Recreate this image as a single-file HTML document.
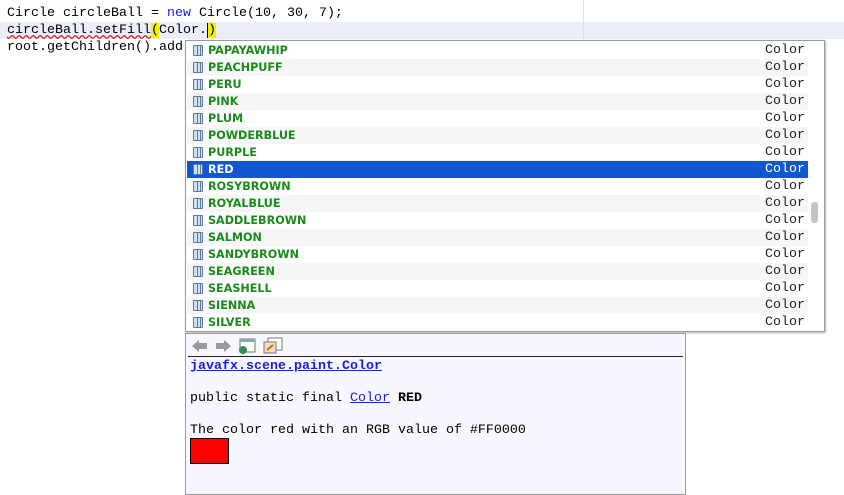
<!DOCTYPE html>
<html><head><style>
body{margin:0;width:844px;height:492px;background:#fff;position:relative;overflow:hidden;font-family:"Liberation Mono",monospace;font-size:13.33px}
.code{position:absolute;left:7px;white-space:pre;color:#000;line-height:17px}
.pop{position:absolute;left:185px;top:40px;width:638px;height:290px;border:1px solid #9a9a9a;background:#fff;box-shadow:1px 1px 2px rgba(0,0,0,.3)}
.row{position:absolute;left:1px;width:621px;height:17px}
.row .n{position:absolute;left:21px;top:1px;font:bold 11.2px "DejaVu Sans",sans-serif;color:#1a8a1a;line-height:15px}
.row .c{position:absolute;right:3px;top:1px;color:#222}
.row .i{position:absolute;left:6px;top:3px;width:10px;height:11px;border:1px solid #5a7aa0;background:linear-gradient(90deg,#cfe0f0 0 3px,#5a7aa0 3px 4px,#cfe0f0 4px 6px,#5a7aa0 6px 7px,#cfe0f0 7px);box-sizing:border-box;border-radius:1px}
.sel{background:#1158d0}.sel .n,.sel .c{color:#fff}
.alt{background:#f6f6f6}
.doc{position:absolute;left:185px;top:333px;width:499px;height:160px;border:1px solid #9a9a9a;background:#f7f7ff}
.doc .t{position:absolute;left:4px;white-space:pre}
a{color:#1a1aee;text-decoration:underline}
</style></head><body>
<div style="position:absolute;left:0;top:22px;width:844px;height:17px;background:#e9eef8"></div>
<div style="position:absolute;left:583px;top:0;width:1px;height:40px;background:#e2e2e2"></div>
<div class="code" style="top:5px">Circle circleBall = <span style="color:#2020e0">new</span> Circle(10, 30, 7);</div>
<div class="code" style="top:22px"><span style="text-decoration:underline wavy #e02020">circleBall.setFill</span><span style="background:#f6f000">(</span>Color.<span style="background:#f6f000;border-left:1px solid #000">)</span></div>
<div class="code" style="top:39px">root.getChildren().add</div>
<div class="pop">
<div class="row" style="top:1px"><div class="i"></div><span class="n">PAPAYAWHIP</span><span class="c">Color</span></div>
<div class="row alt" style="top:18px"><div class="i"></div><span class="n">PEACHPUFF</span><span class="c">Color</span></div>
<div class="row" style="top:35px"><div class="i"></div><span class="n">PERU</span><span class="c">Color</span></div>
<div class="row alt" style="top:52px"><div class="i"></div><span class="n">PINK</span><span class="c">Color</span></div>
<div class="row" style="top:69px"><div class="i"></div><span class="n">PLUM</span><span class="c">Color</span></div>
<div class="row alt" style="top:86px"><div class="i"></div><span class="n">POWDERBLUE</span><span class="c">Color</span></div>
<div class="row" style="top:103px"><div class="i"></div><span class="n">PURPLE</span><span class="c">Color</span></div>
<div class="row sel" style="top:120px"><div class="i"></div><span class="n">RED</span><span class="c">Color</span></div>
<div class="row" style="top:137px"><div class="i"></div><span class="n">ROSYBROWN</span><span class="c">Color</span></div>
<div class="row alt" style="top:154px"><div class="i"></div><span class="n">ROYALBLUE</span><span class="c">Color</span></div>
<div class="row" style="top:171px"><div class="i"></div><span class="n">SADDLEBROWN</span><span class="c">Color</span></div>
<div class="row alt" style="top:188px"><div class="i"></div><span class="n">SALMON</span><span class="c">Color</span></div>
<div class="row" style="top:205px"><div class="i"></div><span class="n">SANDYBROWN</span><span class="c">Color</span></div>
<div class="row alt" style="top:222px"><div class="i"></div><span class="n">SEAGREEN</span><span class="c">Color</span></div>
<div class="row" style="top:239px"><div class="i"></div><span class="n">SEASHELL</span><span class="c">Color</span></div>
<div class="row alt" style="top:256px"><div class="i"></div><span class="n">SIENNA</span><span class="c">Color</span></div>
<div class="row" style="top:273px"><div class="i"></div><span class="n">SILVER</span><span class="c">Color</span></div>
<div style="position:absolute;left:625px;top:161px;width:7px;height:21px;background:#c4c4c4;border-radius:3px"></div>
</div>
<div class="doc">
<svg style="position:absolute;left:4px;top:3px" width="95" height="18">
<path d="M2 9 L9 3 L9 6 L17 6 L17 12 L9 12 L9 15 Z" fill="#999"/>
<path d="M41 9 L34 3 L34 6 L26 6 L26 12 L34 12 L34 15 Z" fill="#999"/>
<rect x="50" y="2" width="15" height="13" fill="#fff" stroke="#777"/><rect x="50" y="2" width="15" height="3" fill="#8aa"/><circle cx="53" cy="13" r="4" fill="#3a8a5a"/>
<rect x="78" y="1" width="14" height="12" fill="#fff" stroke="#777"/><rect x="74" y="5" width="12" height="11" fill="#f0e0c0" stroke="#777"/><path d="M77 13 L83 8" stroke="#c60" stroke-width="2"/>
</svg>
<div style="position:absolute;left:2px;top:22px;width:495px;height:1px;background:#222"></div>
<div class="t" style="top:25px"><a style="font-weight:bold">javafx.scene.paint.Color</a></div>
<div class="t" style="top:57px">public static final <a>Color</a> <b>RED</b></div>
<div class="t" style="top:89px">The color red with an RGB value of #FF0000</div>
<div style="position:absolute;left:4px;top:104px;width:37px;height:24px;background:#f00;border:1px solid #000"></div>
</div>
</body></html>
